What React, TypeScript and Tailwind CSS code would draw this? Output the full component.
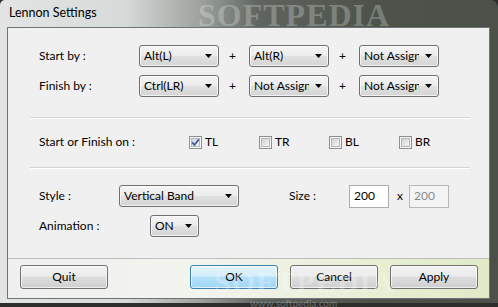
import React from "react";

const comboBg =
  "bg-[linear-gradient(180deg,#f4f4f4_0%,#ececec_48%,#e0e0e0_52%,#d4d4d4_100%)]";

function Combo({ className, children }: { className: string; children: React.ReactNode }) {
  return (
    <div
      className={`h-[22px] border border-[#707070] rounded-[3px] ${comboBg} shadow-[inset_0_0_0_1px_rgba(255,255,255,0.7)] flex items-center pl-[4px] pr-[6px] gap-[6px] ${className}`}
    >
      <span className="flex-1 overflow-hidden whitespace-nowrap leading-[20px] text-black">{children}</span>
      <svg width="7" height="4" viewBox="0 0 7 4" className="shrink-0">
        <path d="M0 0H7L3.5 4Z" fill="#000" />
      </svg>
    </div>
  );
}

function Check({ checked }: { checked?: boolean }) {
  return (
    <svg width="13" height="13" viewBox="0 0 13 13" className="shrink-0">
      <defs>
        <linearGradient id={checked ? "cg1" : "cg0"} x1="0" y1="0" x2="1" y2="1">
          <stop offset="0" stopColor="#cdd0d5" />
          <stop offset="1" stopColor="#f7f7f7" />
        </linearGradient>
      </defs>
      <rect x="0.5" y="0.5" width="12" height="12" fill="#f6f6f6" stroke="#8e8f8f" />
      <rect x="2.5" y="2.5" width="8" height="8" fill={`url(#${checked ? "cg1" : "cg0"})`} stroke="#b4b7bb" />
      {checked && (
        <path d="M3.2 6.4L5.4 9L9.8 3.4" fill="none" stroke="#3f5a98" strokeWidth="1.7" />
      )}
    </svg>
  );
}

function Btn({ children, primary, className }: { children: React.ReactNode; primary?: boolean; className: string }) {
  return (
    <div
      className={`h-[24px] w-[88px] rounded-[3px] border flex items-center justify-center text-black shadow-[inset_0_0_0_1px_rgba(255,255,255,0.65)] ${
        primary
          ? "border-[#3c7fb1] bg-[linear-gradient(180deg,#e5f4fc_0%,#d3edfb_45%,#b2e0f9_52%,#a2d6f4_100%)]"
          : "border-[#707070] bg-[linear-gradient(180deg,#f2f2f2_0%,#ebebeb_45%,#dddddd_52%,#cfcfcf_100%)]"
      } ${className}`}
    >
      {children}
    </div>
  );
}

function Sep() {
  return (
    <div className="ml-[22px] w-[440px] h-[2px] border-t border-[#d5d5d5] border-b border-b-white" />
  );
}

export default function App() {
  return (
    <div className="w-[498px] h-[307px] bg-[#2d2e2c] overflow-hidden relative font-['Lato',sans-serif] text-[12px] text-black">
      <div className="w-[498px] h-[303px] rounded-tr-[8px] rounded-tl-[5px] bg-[linear-gradient(90deg,#e2e5e4_0%,#d6dad8_25%,#9ea39f_40%,#5f655e_52%,#4d534b_75%,#4b5149_100%)] flex flex-col relative">
        <div className="h-[27px] pl-[9px] flex items-center pb-[1px] text-[12.5px] text-black">Lennon Settings</div>
        <div className="ml-[7px] mr-[8px] h-[272px] border border-[#6f7479] bg-[#f0f0f0] flex flex-col">
          <div className="h-[230px] flex flex-col pt-[17px]">
            <div className="flex items-center pl-[31px] h-[22px]">
              <div className="w-[100px]">Start by :</div>
              <Combo className="w-[80px]">Alt(L)</Combo>
              <div className="w-[30px] text-center pr-[3px]">+</div>
              <Combo className="w-[80px]">Alt(R)</Combo>
              <div className="w-[30px] text-center pr-[3px]">+</div>
              <Combo className="w-[80px]">Not Assigned</Combo>
            </div>
            <div className="flex items-center pl-[31px] h-[22px] mt-[8px]">
              <div className="w-[100px]">Finish by :</div>
              <Combo className="w-[80px]">Ctrl(LR)</Combo>
              <div className="w-[30px] text-center pr-[3px]">+</div>
              <Combo className="w-[80px]">Not Assigned</Combo>
              <div className="w-[30px] text-center pr-[3px]">+</div>
              <Combo className="w-[80px]">Not Assigned</Combo>
            </div>
            <div className="mt-[20px]">
              <Sep />
            </div>
            <div className="flex items-center pl-[31px] h-[16px] mt-[15px]">
              <div className="w-[150px]">Start or Finish on :</div>
              <div className="w-[70px] flex items-center gap-[3px]">
                <Check checked />
                <span>TL</span>
              </div>
              <div className="w-[70px] flex items-center gap-[3px]">
                <Check />
                <span>TR</span>
              </div>
              <div className="w-[70px] flex items-center gap-[3px]">
                <Check />
                <span>BL</span>
              </div>
              <div className="w-[70px] flex items-center gap-[3px]">
                <Check />
                <span>BR</span>
              </div>
            </div>
            <div className="mt-[17px]">
              <Sep />
            </div>
            <div className="flex items-center pl-[31px] h-[22px] mt-[16px]">
              <div className="w-[80px]">Style :</div>
              <Combo className="w-[120px]">Vertical Band</Combo>
              <div className="ml-[50px] w-[60px]">Size :</div>
              <div className="w-[40px] h-[23px] border border-[#abadb3] bg-white flex items-center pl-[4px]">200</div>
              <div className="w-[20px] text-center pl-[2px]">x</div>
              <div className="w-[40px] h-[23px] border border-[#b5b8bc] bg-[#f4f4f4] flex items-center pl-[4px] text-[#8a8a8a]">200</div>
            </div>
            <div className="flex items-center pl-[31px] h-[22px] mt-[8px]">
              <div className="w-[111px]">Animation :</div>
              <Combo className="w-[49px]">ON</Combo>
            </div>
          </div>
          <div className="h-[40px] border-t border-[#bdbdbd] bg-[linear-gradient(90deg,#f0f0f0_0%,#f2f4ee_40%,#e8efd6_75%,#e0eac6_100%)] flex items-start pt-[6px] pl-[12px]">
            <Btn className="">Quit</Btn>
            <Btn primary className="ml-[82px]">OK</Btn>
            <Btn className="ml-[12px]">Cancel</Btn>
            <Btn className="ml-[12px]">Apply</Btn>
          </div>
        </div>
        <span className="absolute left-[198px] top-[-9px] font-['Liberation_Serif',serif] font-bold text-[32px] tracking-[1px] text-white/25 pointer-events-none">
          SOFTPEDIA
        </span>
        <span className="absolute left-[214px] top-[259px] font-['Liberation_Serif',serif] font-bold text-[30px] tracking-[1px] text-white/25 pointer-events-none">
          SOFTPEDIA
        </span>
        <span className="absolute left-[250px] top-[296px] text-[10px] text-white/30 pointer-events-none">www.softpedia.com</span>
      </div>
    </div>
  );
}
